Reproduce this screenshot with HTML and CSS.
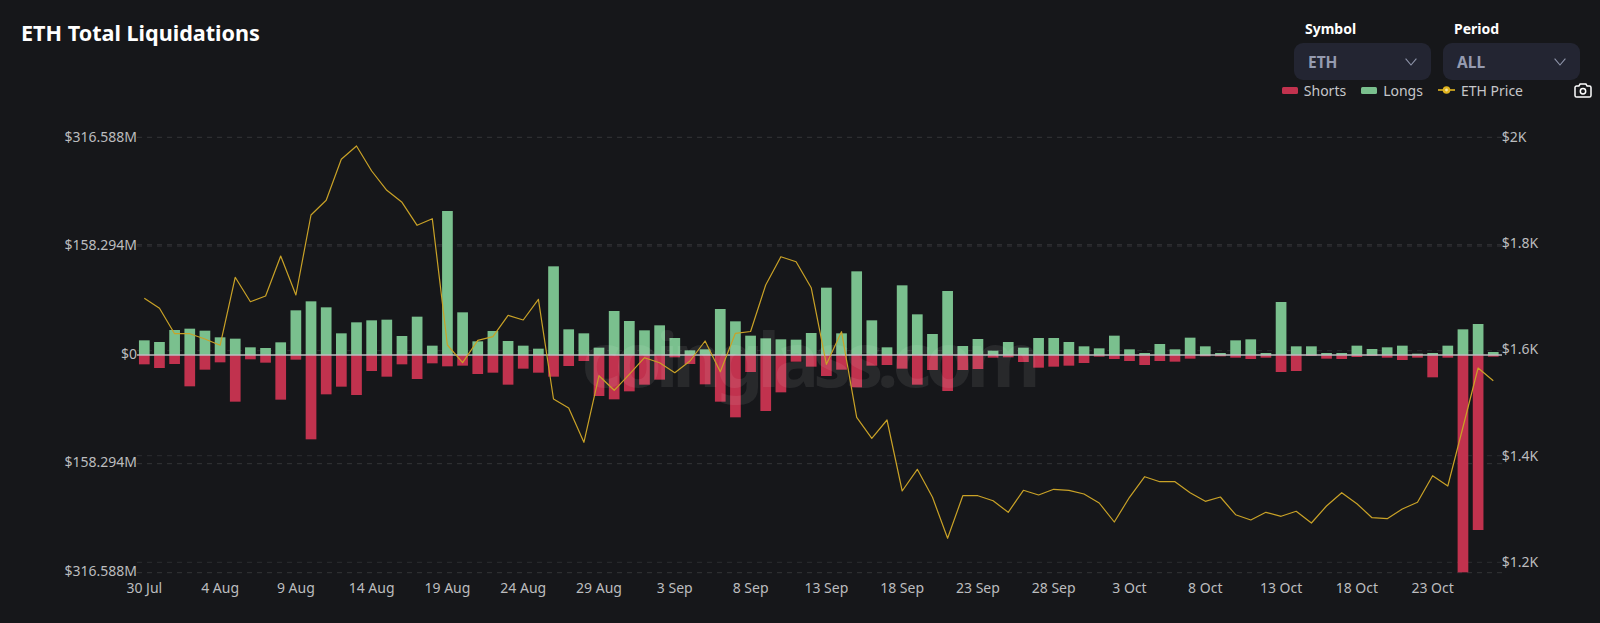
FILE: index.html
```html
<!DOCTYPE html>
<html lang="en">
<head>
<meta charset="utf-8">
<title>ETH Total Liquidations</title>
<link rel="stylesheet" href="styles.css">
</head>
<body>
<main class="page">
  <header class="top">
    <h1 class="title">ETH Total Liquidations</h1>
    <div class="filters">
      <div class="field">
        <div class="field-label">Symbol</div>
        <div class="select"><span>ETH</span>
          <svg class="chevron" viewBox="0 0 12 8"><polyline points="0.6,0.6 6,7 11.4,0.6"/></svg>
        </div>
      </div>
      <div class="field">
        <div class="field-label">Period</div>
        <div class="select"><span>ALL</span>
          <svg class="chevron" viewBox="0 0 12 8"><polyline points="0.6,0.6 6,7 11.4,0.6"/></svg>
        </div>
      </div>
    </div>
  </header>
  <div class="legend">
    <div class="legend-item"><span class="swatch swatch-short"></span>Shorts</div>
    <div class="legend-item"><span class="swatch swatch-long"></span>Longs</div>
    <div class="legend-item">
      <svg class="line-key" viewBox="0 0 17 8"><line x1="0" y1="4" x2="17" y2="4"/><circle cx="8.5" cy="4" r="2.6"/></svg>ETH Price
    </div>
    <svg class="camera" viewBox="0 0 18 15">
      <path d="M1 4.6a1.6 1.6 0 0 1 1.6-1.6h2.3l1.2-2h5.8l1.2 2h2.3A1.6 1.6 0 0 1 17 4.6v7.8a1.6 1.6 0 0 1-1.6 1.6H2.6A1.6 1.6 0 0 1 1 12.400z"/>
      <circle cx="9" cy="8.300" r="2.700"/>
    </svg>
  </div>
  <svg id="chart" class="chart" viewBox="0 108 1600 515" role="img" aria-label="ETH total liquidations chart">
    <g id="grid"></g>
    <g id="bars"></g>
    <line class="zero" x1="137" y1="355" x2="1502" y2="355"/>
    <text class="watermark" x="808" y="387">coinglass.com</text>
    <polyline id="price" class="price"/>
    <g id="labels"></g>
  </svg>
</main>
<script src="chart.js"></script>
</body>
</html>
```
FILE: styles.css
```css
* { box-sizing: border-box; }
html, body { margin: 0; height: 100%; }
body {
  background: #16171a;
  color: #fff;
  font-family: "Noto Sans", "Liberation Sans", sans-serif;
  overflow: hidden;
}
.page { width: 1600px; height: 623px; display: flex; flex-direction: column; }
.top {
  display: flex;
  justify-content: space-between;
  align-items: flex-start;
  padding: 18px 20px 0 21px;
  height: 80px;
}
.title { margin: 0; font-size: 21.6px; line-height: 29px; font-weight: 700; }
.filters { display: flex; gap: 12px; padding-top: 1px; }
.field { width: 137px; }
.field-label {
  font-size: 14px;
  font-weight: 700;
  line-height: 20px;
  padding-left: 11px;
  height: 24px;
}
.select {
  height: 37px;
  background: #232532;
  border-radius: 9px;
  padding: 0 14px;
  display: flex;
  align-items: center;
  justify-content: space-between;
  color: #959bb0;
  font-size: 15.5px;
  font-weight: 700;
}
.chevron { width: 12px; height: 8px; }
.chevron polyline { fill: none; stroke: #8f95aa; stroke-width: 1.1; }
.legend {
  height: 20px;
  display: flex;
  align-items: center;
  justify-content: flex-end;
  padding-right: 8px;
  font-size: 14px;
  color: #c6c7ca;
}
.legend-item { display: flex; align-items: center; gap: 6px; margin-right: 15px; }
.legend-item:nth-child(3) { margin-right: 51px; }
.swatch { width: 16px; height: 7px; border-radius: 1.5px; }
.swatch-short { background: #c1324e; }
.swatch-long { background: #7ac08e; }
.line-key { width: 17px; height: 8px; }
.line-key line { stroke: #e0b420; stroke-width: 1.6; }
.line-key circle { fill: #f6e6a8; stroke: #e0b420; stroke-width: 2.4; }
.camera { width: 18px; height: 15px; }
.camera path, .camera circle { fill: none; stroke: #fff; stroke-width: 1.5; }
.chart { display: block; width: 1600px; height: 515px; margin-top: 8px; }
.grid-line { stroke: #343538; stroke-width: 1; stroke-dasharray: 5 5; }
.grid-line-soft { stroke: #2c2d30; }
.bar-long { fill: #7ac08e; }
.bar-short { fill: #c1324e; }
.zero { stroke: #bdbdbf; stroke-width: 1.5; }
.price { fill: none; stroke: #c9a227; stroke-width: 1.2; stroke-linejoin: round; }
.watermark {
  font-family: "Noto Sans", sans-serif;
  font-size: 76px;
  font-weight: 700;
  letter-spacing: -6.2px;
  text-anchor: middle;
  fill: #fff;
  fill-opacity: 0.08;
}
.axis { font-size: 14px; fill: #bcbdbf; dominant-baseline: central; }
.axis-left { text-anchor: end; }
.axis-x { text-anchor: middle; }
```
FILE: chart.js
```js
var SVG_NS = "http://www.w3.org/2000/svg";
var ZERO = 355, X0 = 144.3, STEP = 15.157, BAR_W = 10.7;

// bar sizes in thirds of a pixel
var longs = [44,39,75,79,73,53,49,23,21,38,134,161,143,65,98,104,106,57,115,28,
  432,128,41,72,42,28,19,266,77,65,22,132,102,74,89,51,14,17,138,101,
  58,50,47,46,66,202,65,251,104,23,209,122,63,192,27,48,13,39,22,51,
  51,39,26,20,58,17,6,33,17,52,26,6,44,47,6,159,26,26,6,6,
  28,18,23,28,4,6,28,77,93,9];
var shorts = [28,39,27,94,44,22,140,13,23,134,14,253,118,95,120,48,65,28,72,25,
  34,32,57,53,89,41,53,65,33,18,123,133,109,89,74,7,27,88,140,187,
  51,168,112,20,35,63,44,97,32,30,41,89,45,108,45,42,8,7,21,38,
  35,32,24,5,12,18,30,18,20,11,4,4,8,12,8,51,48,3,11,12,
  6,3,8,15,8,67,8,652,525,5];
var price = [298.3,308.3,333.7,333.7,339,345.3,277.3,301.7,296,256,295,215,200.3,159.3,146,171,190.3,202.3,225.3,218.7,
  345,362.7,340.3,336.7,315.3,320,299.3,399,408,442.3,375.7,390.3,374.3,357.7,362.7,372.7,361,341,371.7,333.3,
  331.5,285,256.7,261.7,287.7,364.3,331.7,417.3,438.3,420,491,469.3,497.3,538.3,495.7,495.7,500.7,512.3,490.3,495,
  489.3,490.3,494,503,522,497.3,476.7,481.7,481.7,492.7,501.3,497,514.7,520,512.3,516.3,511.3,523,506,492.7,
  503.7,517.7,518.7,509,502.3,475.7,486,427,368,380.7];
var dates = ["30 Jul","4 Aug","9 Aug","14 Aug","19 Aug","24 Aug","29 Aug","3 Sep","8 Sep","13 Sep",
  "18 Sep","23 Sep","28 Sep","3 Oct","8 Oct","13 Oct","18 Oct","23 Oct"];

function el(name, attrs, text) {
  var node = document.createElementNS(SVG_NS, name);
  for (var k in attrs) node.setAttribute(k, attrs[k]);
  if (text) node.textContent = text;
  return node;
}
function cx(i) { return X0 + STEP * i; }

var grid = document.getElementById("grid");
[137.3, 246, 463.7, 572.7].forEach(function (y) {
  grid.appendChild(el("line", { "class": "grid-line", x1: 137, x2: 1502, y1: y, y2: y }));
});
[244.5, 350.7, 455.7, 562.3].forEach(function (y) {
  grid.appendChild(el("line", { "class": "grid-line grid-line-soft", x1: 137, x2: 1502, y1: y, y2: y }));
});

var bars = document.getElementById("bars");
longs.forEach(function (v, i) {
  var h = v / 3;
  bars.appendChild(el("rect", { "class": "bar-long", x: cx(i) - BAR_W / 2, y: ZERO - h, width: BAR_W, height: h }));
});
shorts.forEach(function (v, i) {
  bars.appendChild(el("rect", { "class": "bar-short", x: cx(i) - BAR_W / 2, y: ZERO, width: BAR_W, height: v / 3 }));
});

document.getElementById("price").setAttribute("points", price.map(function (y, i) {
  return cx(i).toFixed(1) + "," + y;
}).join(" "));

var labels = document.getElementById("labels");
[["$316.588M",136],["$158.294M",244],["$0",353],["$158.294M",461.5],["$316.588M",570.5]].forEach(function (a) {
  labels.appendChild(el("text", { "class": "axis axis-left", x: 137, y: a[1] }, a[0]));
});
[["$2K",136],["$1.8K",242],["$1.6K",348.3],["$1.4K",455],["$1.2K",561.7]].forEach(function (a) {
  labels.appendChild(el("text", { "class": "axis", x: 1501.7, y: a[1] }, a[0]));
});
dates.forEach(function (d, i) {
  labels.appendChild(el("text", { "class": "axis axis-x", x: cx(i * 5), y: 587 }, d));
});
```
